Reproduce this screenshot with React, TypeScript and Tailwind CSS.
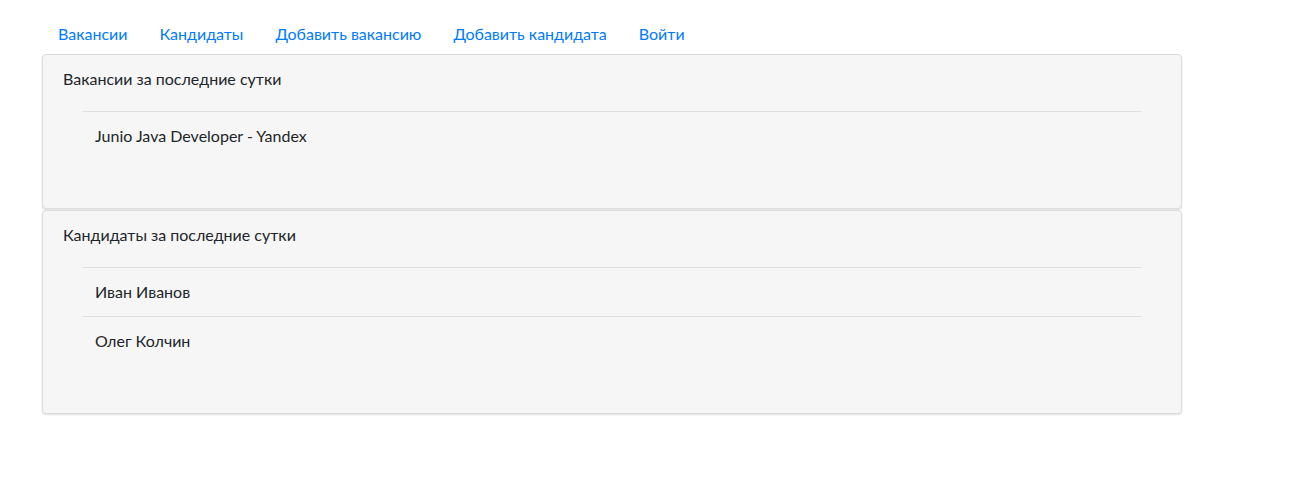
const links = ["Вакансии", "Кандидаты", "Добавить вакансию", "Добавить кандидата", "Войти"];

function Card({ title, items }: { title: string; items: string[] }) {
  return (
    <div className="rounded border border-[#dcdcdc] bg-[#f6f6f6] px-5 pt-3 pb-12 shadow-[0_1px_2px_rgba(0,0,0,0.12)]">
      <div className="leading-6">{title}</div>
      <ul className="mx-5 mt-5">
        {items.map((item) => (
          <li key={item} className="border-t border-[#dedede] px-3 py-3 leading-6">
            {item}
          </li>
        ))}
      </ul>
    </div>
  );
}

export default function App() {
  return (
    <div className="min-h-screen bg-white text-[16px] text-[#212529] [font-family:Lato,'Noto_Sans',sans-serif]">
      <div className="w-[1140px] ml-[42px] pt-[14px]">
        <nav className="flex">
          {links.map((link) => (
            <a key={link} href="#" className="px-4 py-2 leading-6 text-[#007bff]">
              {link}
            </a>
          ))}
        </nav>
        <div className="flex flex-col gap-px">
          <Card title="Вакансии за последние сутки" items={["Junio Java Developer - Yandex"]} />
          <Card title="Кандидаты за последние сутки" items={["Иван Иванов", "Олег Колчин"]} />
        </div>
      </div>
    </div>
  );
}
